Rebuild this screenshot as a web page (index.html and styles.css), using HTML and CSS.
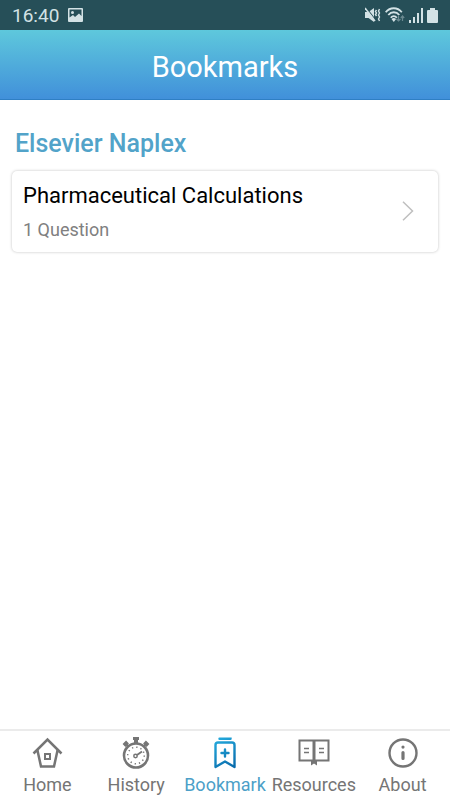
FILE: index.html
```html
<!DOCTYPE html>
<html lang="en">
<head>
    <meta charset="UTF-8">
    <meta name="viewport" content="width=device-width, initial-scale=1.0">
    <title>Bookmarks</title>
    <link rel="stylesheet" href="styles.css">
</head>
<body>
    <div class="status-bar">
        <span class="time">16:40</span>
        <svg width="15" height="14" viewBox="0 0 15 14">
            <path fill="currentColor" fill-rule="evenodd" d="M1 0h13a1 1 0 0 1 1 1v12a1 1 0 0 1-1 1H1a1 1 0 0 1-1-1V1a1 1 0 0 1 1-1zM1.500 1.500v8L5 7l2 2 4-3.500 2.500 2.500V1.500z"/>
            <circle cx="4.500" cy="4.500" r="1.500" fill="currentColor"/>
        </svg>
        <div class="status-icons">
            <svg width="16" height="16" viewBox="0 0 16 16" fill="none" stroke="currentColor">
                <path fill="currentColor" stroke="none" d="M0 5h3.500l5.500-4v14l-5.500-4H0z"/>
                <path stroke="#264f58" stroke-width="1.200" d="M1.500 1l9.500 12.500"/>
                <path stroke-width="1.500" d="M0 1l10 13"/>
                <path stroke-width="1.400" d="M11.500 3l-1 1.500 1 1.500-1 1.500 1 1.500M14.500 2l-1 2 1 2-1 2 1 2-1 2 1 2"/>
            </svg>
            <svg width="20" height="16" viewBox="0 0 20 16" fill="none" stroke="currentColor">
                <path stroke-width="1.800" d="M.7 5.200C5-.1 12.500-.1 16.800 5.200M3.300 8c3-3.700 8-3.700 11 0M5.800 10.800c1.800-2.200 4.200-2.200 6 0"/>
                <path fill="currentColor" stroke="none" d="M6.500 12q2.300-2 4.600 0l-2.300 3z"/>
                <path opacity=".4" stroke-width="1.200" d="M13.500 9v5M11.500 12l2 2 2-2M17.500 14V9M15.800 11l1.700-2 1.700 2"/>
            </svg>
            <svg width="14" height="15" viewBox="0 0 14 15" fill="currentColor">
                <path d="M0 12h2v3H0zM4 9h2v6H4zM8 5h2v10H8zM12 0h2v15h-2z"/>
            </svg>
            <svg width="11" height="15" viewBox="0 0 11 15" fill="currentColor">
                <path d="M3 0h5v2h2a1 1 0 0 1 1 1v11a1 1 0 0 1-1 1H1a1 1 0 0 1-1-1V3a1 1 0 0 1 1-1h2z"/>
            </svg>
        </div>
    </div>

    <header class="header">
        <h1>Bookmarks</h1>
    </header>

    <main class="content">
        <h2>Elsevier Naplex</h2>
        <a class="card" href="#">
            <span class="card-text">
                <span class="card-title">Pharmaceutical Calculations</span>
                <span class="card-count">1 Question</span>
            </span>
            <svg width="12" height="20" viewBox="0 0 12 20" fill="none" stroke="#bfbfbf" stroke-width="1.500">
                <path d="M1 .8L10.500 10 1 19.200"/>
            </svg>
        </a>
    </main>

    <nav class="tab-bar">
        <a class="tab" href="#">
            <svg width="32" height="32" viewBox="0 0 32 32" fill="none" stroke="currentColor" stroke-width="2.500">
                <path d="M2.500 16.500L16.500 2.500l14 14M6.500 13.500l3.500 16h13l3.500-16"/>
                <path stroke-width="2" d="M14 17h5v5h-5z"/>
            </svg>
            <span>Home</span>
        </a>
        <a class="tab" href="#">
            <svg width="32" height="32" viewBox="0 0 32 32" fill="none" stroke="currentColor">
                <circle cx="16" cy="18.500" r="12" stroke-width="2.600"/>
                <path stroke-width="4" d="M16 2v5"/>
                <path stroke-width="3" d="M13 1.500h6"/>
                <path stroke-width="4" d="M4 8.500l3.500-3.500M28 8.500l-3.500-3.500"/>
                <path stroke-width="2" d="M6 7l2.500 2.500M26 7l-2.500 2.500"/>
                <circle cx="16" cy="18.500" r="8.300" stroke-width="1.500" stroke-dasharray="1.300 3.046"/>
                <circle cx="15.500" cy="19" r="1.700" stroke-width="1.500"/>
                <path stroke-width="1.800" d="M17 18l5-3.500"/>
            </svg>
            <span>History</span>
        </a>
        <a class="tab active" href="#">
            <svg width="32" height="32" viewBox="0 0 32 32" fill="none" stroke="url(#blue)" stroke-width="2.400">
                <defs>
                    <linearGradient id="blue" gradientUnits="userSpaceOnUse" x1="6" y1="0" x2="26" y2="32">
                        <stop offset="0" stop-color="#25aee0"/>
                        <stop offset="1" stop-color="#0767a8"/>
                    </linearGradient>
                </defs>
                <path stroke-linejoin="round" d="M6.500 30V8a2.500 2.500 0 0 1 2.500-2.500h14A2.500 2.500 0 0 1 25.500 8v22L16 24.500z"/>
                <path stroke-linecap="round" d="M10.500 1.700h11l0 .01M16 12.500v7M12.500 16h7"/>
            </svg>
            <span>Bookmark</span>
        </a>
        <a class="tab" href="#">
            <svg width="32" height="32" viewBox="0 0 32 32" fill="none" stroke="currentColor">
                <path stroke-width="2" d="M15.500 23.500H1.500v-20h29v20H16.500"/>
                <path stroke-width="3" d="M16 3v21"/>
                <path fill="currentColor" stroke="none" d="M13 23h6v5.500l-3-2-3 2z"/>
                <path stroke-width="1.700" d="M6 11.500h5M6 15.500h5M21 11.500h5M21 15.500h5"/>
            </svg>
            <span>Resources</span>
        </a>
        <a class="tab" href="#">
            <svg width="32" height="32" viewBox="0 0 32 32" fill="none" stroke="currentColor">
                <circle cx="16" cy="16" r="13.500" stroke-width="2.400"/>
                <path stroke-width="3.200" stroke-linecap="round" d="M16 15.500v6M16 10v.1"/>
            </svg>
            <span>About</span>
        </a>
    </nav>
</body>
</html>
```

FILE: styles.css
```css
* {
    box-sizing: border-box;
}

body {
    margin: 0;
    min-height: 100vh;
    display: flex;
    flex-direction: column;
    background-color: #fff;
    font-family: Roboto, "Liberation Sans", sans-serif;
}

h1, h2 {
    margin: 0;
}

a {
    color: inherit;
    text-decoration: none;
}

svg {
    display: block;
    flex-shrink: 0;
}

.status-bar {
    display: flex;
    align-items: center;
    gap: 9px;
    height: 30px;
    padding: 0 12px;
    background-color: #264f58;
    color: #d3e2e5;
}

.time {
    font-size: 19px;
}

.status-icons {
    display: flex;
    align-items: center;
    gap: 4px;
    margin-left: auto;
}

.header {
    display: flex;
    align-items: center;
    justify-content: center;
    height: 70px;
    padding-top: 4px;
    border-bottom: 1px solid #2f7fc4;
    background: linear-gradient(#5ec8dc, #4190da);
    color: #fff;
}

.header h1 {
    font-size: 29px;
    font-weight: 400;
}

.content {
    flex: 1;
    padding: 29px 12px;
}

.content h2 {
    padding-left: 3px;
    margin-bottom: 12px;
    font-size: 25px;
    line-height: 30px;
    font-weight: 500;
    color: #52a3c9;
}

.card {
    display: flex;
    align-items: center;
    justify-content: space-between;
    padding: 9px 24px 10px 11px;
    border-radius: 5px;
    background-color: #fff;
    box-shadow: 0 0 3px rgba(0, 0, 0, 0.25);
}

.card-text {
    display: flex;
    flex-direction: column;
    gap: 6px;
}

.card-title {
    font-size: 22px;
    line-height: 32px;
    color: #000;
}

.card-count {
    font-size: 18px;
    line-height: 24px;
    color: #808080;
}

.tab-bar {
    display: flex;
    height: 71px;
    padding: 6px 3px 0;
    border-top: 2px solid #ebebeb;
}

.tab {
    flex: 1 1 0;
    min-width: 0;
    display: flex;
    flex-direction: column;
    align-items: center;
    gap: 4px;
    font-size: 18px;
    line-height: 24px;
    color: #757575;
}

.tab.active {
    color: #4c9fc8;
}
```
